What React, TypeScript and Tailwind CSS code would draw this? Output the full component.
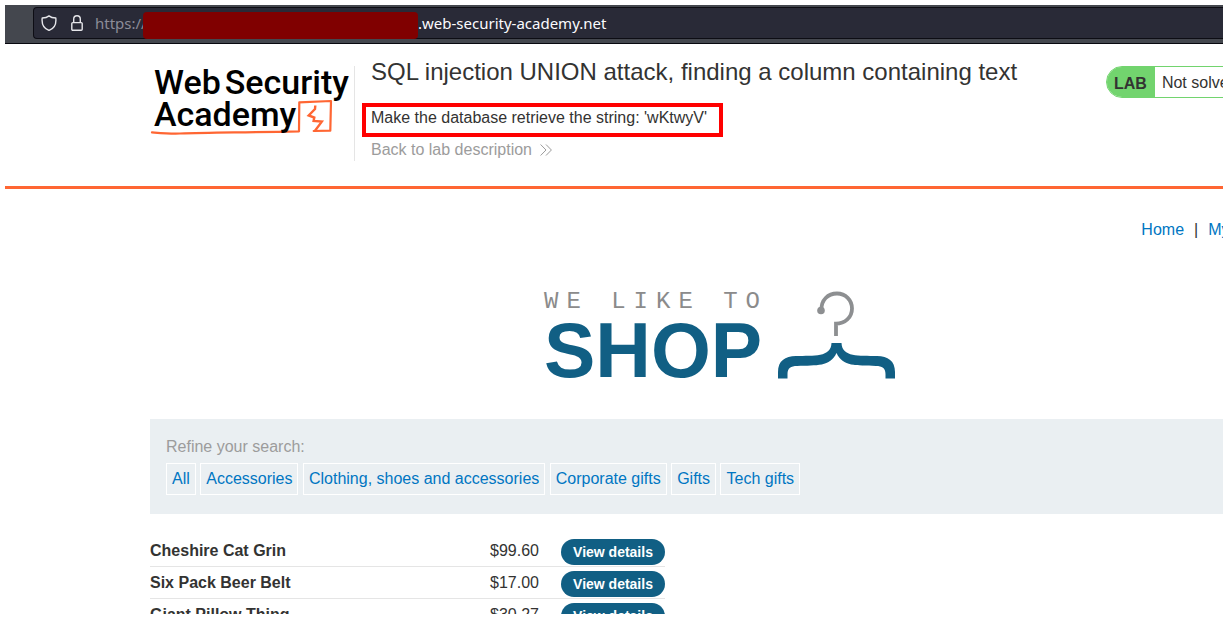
import React from "react";

const categories = [
  "All",
  "Accessories",
  "Clothing, shoes and accessories",
  "Corporate gifts",
  "Gifts",
  "Tech gifts",
];

const products = [
  { name: "Cheshire Cat Grin", price: "$99.60" },
  { name: "Six Pack Beer Belt", price: "$17.00" },
  { name: "Giant Pillow Thing", price: "$30.27" },
];

function ShieldIcon() {
  return (
    <svg className="h-4 w-4 shrink-0" viewBox="0 0 16 16" fill="none" stroke="#e6e6ea" strokeWidth="1.4" strokeLinejoin="round" aria-hidden="true">
      <path d="M8 .9 C6.4 2.3 4 3 1.2 3 C.6 8.400 2.500 13.400 8 15.400 C13.500 13.400 15.400 8.400 14.800 3 C12 3 9.600 2.300 8 .9 Z" />
    </svg>
  );
}

function LockIcon() {
  return (
    <svg className="h-4 w-3 shrink-0" viewBox="0 0 12 16" fill="none" stroke="#e6e6ea" strokeWidth="1.4" aria-hidden="true">
      <rect x=".8" y="7.600" width="10.400" height="7.600" rx="1" />
      <path d="M2.700 7.500 V4 A3.300 3.300 0 0 1 9.300 4 V7.500" />
    </svg>
  );
}

function AddressBar() {
  return (
    <div className="border-b border-[#08080f] bg-[#44474e] pt-[2px] pb-1 pl-7">
      <div className="flex h-8 items-center rounded-l border border-r-0 border-[#0d0d14] bg-[#292a37] pl-[7px] font-['Noto_Sans',sans-serif] text-[15px] leading-5">
        <ShieldIcon />
        <span className="flex w-10 justify-center">
          <LockIcon />
        </span>
        <span className="-ml-[2px] w-12 overflow-hidden whitespace-nowrap text-[#8c8c98]">https://</span>
        <span className="mt-[5px] h-[27px] w-[275px] shrink-0 rounded bg-[#800000]" />
        <span className="whitespace-nowrap text-[#fbfbfe]">.web-security-academy.net</span>
      </div>
    </div>
  );
}

function AcademyLogo() {
  return (
    <a href="#" aria-label="Web Security Academy" className="relative block h-[95px] w-[205px] shrink-0 border-r border-[#e5e5e5] pl-1 font-[Roboto,sans-serif] text-[34px] leading-8 font-medium text-black">
      <span className="flex gap-1">
        <span>Web</span>
        <span>Security</span>
      </span>
      <span className="relative z-10 block">Academy</span>
      <svg className="absolute top-0 left-0 h-[95px] w-[205px]" viewBox="0 0 205 95" fill="none" aria-hidden="true">
        <path d="M2 66.400 C10 67 20 67.900 30 67.500 C60 66.300 90 66.600 149 65.300 L149.300 36.300 L181 35 L180.300 64.600 L163.700 65" stroke="#ff6633" strokeWidth="2.200" strokeLinejoin="round" strokeLinecap="round" />
        <path d="M165.300 39.500 L165 43 L158.700 49.500 L164.300 51.500 L163.600 55 L171.800 55.600 L164.800 65" stroke="#ff6633" strokeWidth="2.400" strokeLinejoin="miter" />
      </svg>
    </a>
  );
}

function LabHeader() {
  return (
    <header className="border-b-[3px] border-[#ff6633] pt-[22px] pb-[25px]">
      <div className="mx-auto flex max-w-[1140px] items-start">
        <AcademyLogo />
        <div className="flex-1 pl-4">
          <h1 className="-mt-2 text-2xl leading-7">SQL injection UNION attack, finding a column containing text</h1>
          <p className="mt-[17px] -ml-[9px] w-fit border-4 border-[#ff0000] pr-3 pb-[5px] pl-[5px] leading-[21px]">
            Make the database retrieve the string: 'wKtwyV'
          </p>
          <a href="#" className="mt-[2px] flex items-center gap-2 leading-[22px] text-[#9c9c9c]">
            Back to lab description
            <svg className="h-3 w-3" viewBox="0 0 12 12" fill="none" stroke="#9c9c9c" aria-hidden="true">
              <path d="M.6 .5 L6 6 L.6 11.500 M6 .5 L11.400 6 L6 11.500" />
            </svg>
          </a>
        </div>
        <div className="flex h-8 w-[184px] items-stretch overflow-hidden rounded-l-full border border-[#72d46e] leading-[31px]">
          <span className="bg-[#72d46e] pt-px pr-2 pl-[7px] font-bold">LAB</span>
          <span className="pl-[7px] whitespace-nowrap">Not solved</span>
        </div>
      </div>
    </header>
  );
}

function ShopBanner() {
  return (
    <div className="mt-12 flex justify-center gap-[18px] text-[#115f84]">
      <h2 className="w-[216px]">
        <span className="block font-['Liberation_Mono',monospace] text-2xl leading-6 tracking-[8px] whitespace-nowrap text-[#8b8b8b]">WE LIKE TO</span>
        <span className="block text-[77px] leading-[72px] font-bold">SHOP</span>
      </h2>
      <svg className="h-[90px] w-[118px]" viewBox="0 0 118 90" fill="none" aria-hidden="true">
        <path d="M43.500 20 C43 10 50 3.500 59 3.500 C67.500 3.500 74 10 74 18.500 C74 27.500 67 33.700 58 33.700 V46" stroke="#8d8f91" strokeWidth="3.800" />
        <circle cx="43" cy="20.500" r="3.800" fill="#8d8f91" />
        <path d="M0 88.500 V82 C0 71 7 66 18 66 C36 65.500 53 67.500 53.500 53 H63.500 C64 67.500 81 65.500 99 66 C110 66 117 71 117 82 V88.500 H107.500 V84 C107.500 78 104 76 98 76 C78 75 65 77 58.500 63 C52 77 39 75 19 76 C13 76 9.500 78 9.500 84 V88.500 Z" fill="#115f84" />
      </svg>
    </div>
  );
}

function Filters() {
  return (
    <section className="mt-[33px] bg-[#eaeff2] px-4 pt-4 pb-[19px]">
      <p className="leading-6 text-[#9c9c9c]">Refine your search:</p>
      <div className="mt-1">
        {categories.map((c) => (
          <React.Fragment key={c}>
            <a href="#" className="inline-block h-8 border border-white px-[5px] leading-[30px] text-[#0076c2]">
              {c}
            </a>{" "}
          </React.Fragment>
        ))}
      </div>
    </section>
  );
}

function ProductTable() {
  return (
    <table className="mt-[21px] border-separate border-spacing-0">
      <tbody>
        {products.map((p) => (
          <tr key={p.name}>
            <td className="w-[300px] border-b border-[#e5e5e5] p-0 font-bold">{p.name}</td>
            <td className="w-[89px] border-b border-[#e5e5e5] p-0 text-right">{p.price}</td>
            <td className="border-b border-[#e5e5e5] p-0 pt-1 pb-px pl-[22px]">
              <a href="#" className="block h-[26px] w-[104px] rounded-full bg-[#115f84] text-center text-sm leading-[26px] font-bold text-white">
                View details
              </a>
            </td>
          </tr>
        ))}
      </tbody>
    </table>
  );
}

export default function App() {
  return (
    <div className="h-screen overflow-hidden bg-white p-[5px] font-['Liberation_Sans',sans-serif] text-base text-[#333332]">
      <div className="h-full overflow-hidden">
        <div className="min-w-[1430px]">
          <AddressBar />
          <LabHeader />
          <main className="mx-auto max-w-[1140px] pt-[29px]">
            <nav className="flex justify-end gap-[10px] leading-6">
              <a href="#" className="text-[#0076c2]">Home</a>
              <span>|</span>
              <a href="#" className="text-[#0076c2]">My account</a>
            </nav>
            <ShopBanner />
            <Filters />
            <ProductTable />
          </main>
        </div>
      </div>
    </div>
  );
}
